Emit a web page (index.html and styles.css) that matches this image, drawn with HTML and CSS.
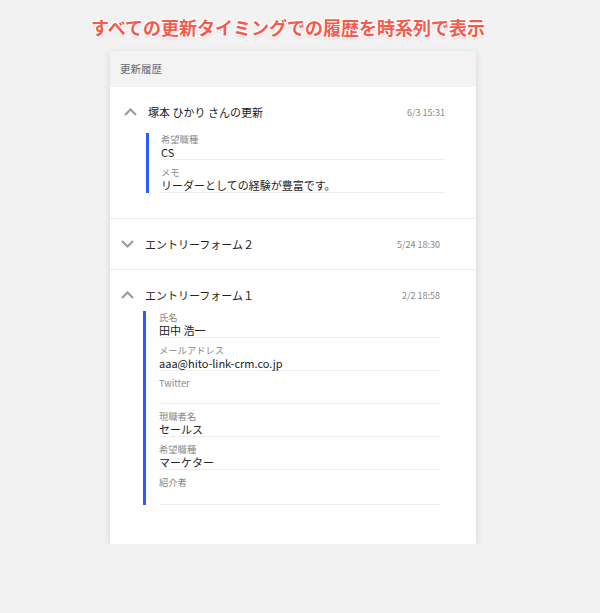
FILE: index.html
```html
<!DOCTYPE html>
<html lang="ja">
	<head>
		<meta charset="utf-8">
		<title>更新履歴</title>
		<meta name="viewport" content="width=device-width, initial-scale=1.0">
		<link rel="stylesheet" href="styles.css">
	</head>
	<body>

    <h1 class="catch">すべての更新タイミングでの履歴を時系列で表示</h1>

    <div class="history-card">
        <div class="history-head">更新履歴</div>

        <div class="entry entry--first">
            <div class="entry-row">
                <svg class="chevron" width="13" height="8" viewBox="0 0 13 8"><path d="M1 7 L6.5 1.5 L12 7" fill="none" stroke="#999" stroke-width="2"/></svg>
                <span class="entry-title">塚本 ひかり さんの更新</span>
                <span class="entry-time">6/3 15:31</span>
            </div>
            <div class="fields">
                <div class="field">
                    <div class="field-label">希望職種</div>
                    <div class="field-value">CS</div>
                </div>
                <div class="field">
                    <div class="field-label">メモ</div>
                    <div class="field-value">リーダーとしての経験が豊富です。</div>
                </div>
            </div>
        </div>

        <div class="entry">
            <div class="entry-row">
                <svg class="chevron" width="13" height="8" viewBox="0 0 13 8"><path d="M1 1 L6.5 6.5 L12 1" fill="none" stroke="#999" stroke-width="2"/></svg>
                <span class="entry-title">エントリーフォーム２</span>
                <span class="entry-time">5/24 18:30</span>
            </div>
        </div>

        <div class="entry entry--last">
            <div class="entry-row">
                <svg class="chevron" width="13" height="8" viewBox="0 0 13 8"><path d="M1 7 L6.5 1.5 L12 7" fill="none" stroke="#999" stroke-width="2"/></svg>
                <span class="entry-title">エントリーフォーム１</span>
                <span class="entry-time">2/2 18:58</span>
            </div>
            <div class="fields">
                <div class="field">
                    <div class="field-label">氏名</div>
                    <div class="field-value">田中 浩一</div>
                </div>
                <div class="field">
                    <div class="field-label">メールアドレス</div>
                    <div class="field-value">aaa@hito-link-crm.co.jp</div>
                </div>
                <div class="field">
                    <div class="field-label">Twitter</div>
                    <div class="field-value"></div>
                </div>
                <div class="field">
                    <div class="field-label">現職者名</div>
                    <div class="field-value">セールス</div>
                </div>
                <div class="field">
                    <div class="field-label">希望職種</div>
                    <div class="field-value">マーケター</div>
                </div>
                <div class="field">
                    <div class="field-label">紹介者</div>
                    <div class="field-value"></div>
                </div>
            </div>
        </div>
    </div>

</body>
</html>
```

FILE: styles.css
```css
html, body { font-family: "Noto Sans CJK JP", "Noto Sans", sans-serif; }
body { background-color:#f2f2f2; margin: 0; padding: 14px 0 0 0; color:#333; }

.catch {
	margin: 0 0 0 91px;
	font-size: 18px;
	line-height: 26px;
	font-weight: 700;
	color: #f65a4c;
	text-shadow:
		-1px -1px 0 #fff, 1px -1px 0 #fff, -1px 1px 0 #fff, 1px 1px 0 #fff,
		0 0 3px #fff, 0 2px 3px rgba(0,0,0,.12);
}

.history-card {
	width: 366px;
	margin: 11px 0 0 110px;
	background: #fff;
	box-shadow: 0 2px 8px rgba(0,0,0,.12);
	padding-bottom: 39px;
}

.history-head {
	height: 36px;
	line-height: 36px;
	background: #f3f3f3;
	padding-left: 10px;
	font-size: 10.5px;
	color: #656b76;
}

.entry { padding: 16px 36px 16px 11px; border-bottom: 1px solid #ececec; }
.entry--first { padding: 16px 31px 25px 14px; }
.entry--last { border-bottom: none; padding-bottom: 0; }

.entry-row { display: flex; align-items: center; height: 18px; }
.chevron { flex: none; margin-right: 11px; }
.entry-title { font-size: 11px; color: #222; flex: 1; }
.entry-time { font-size: 9px; color: #888; }

.fields {
	margin: 7px 0 0 22px;
	border-left: 3px solid #2d5bff;
	padding-left: 13px;
}
.entry--first .fields { margin: 12px 0 0 22px; padding-left: 12px; }

.field { border-bottom: 1px solid #eee; }
.field + .field { margin-top: 6px; }
.field-label { font-size: 9.3px; line-height: 12px; color: #888; }
.field-value { font-size: 11px; line-height: 14px; min-height: 14px; color: #222; }
.field:last-child .field-value:empty { min-height: 16px; }
```
